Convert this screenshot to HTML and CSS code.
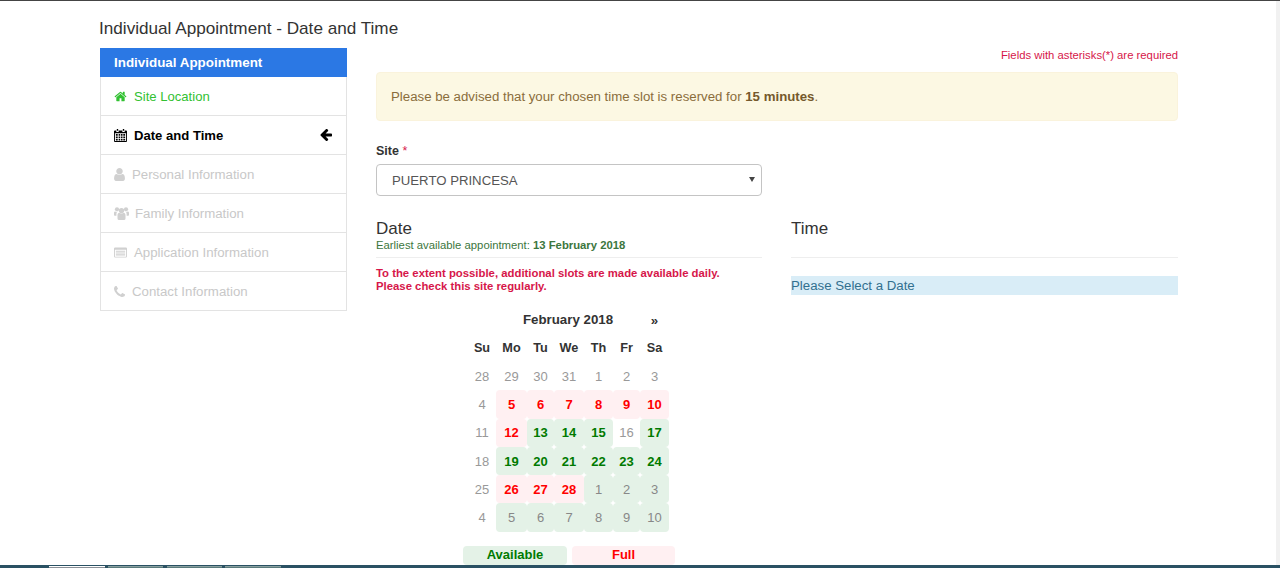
FILE: index.html
```html
<!DOCTYPE html>
<html lang="en">
<head>
    <meta charset="UTF-8">
    <meta name="viewport" content="width=device-width, initial-scale=1.0">
    <title>Individual Appointment - Date and Time</title>
    <link rel="stylesheet" href="styles.css">
</head>
<body>
    <div class="page">
        <h1 class="page-title">Individual Appointment - Date and Time</h1>
        <div class="layout">
            <!-- Steps -->
            <div class="steps">
                <div class="steps-head">Individual Appointment</div>
                <div class="step step-done">
                    <svg class="icon" viewBox="0 0 1664 1792"><path d="M1408 992v480q0 26-19 45t-45 19h-384v-384h-256v384h-384q-26 0-45-19t-19-45v-480q0-1 .5-3t.5-3l575-474 575 474q1 2 1 6zm223-69l-62 74q-8 9-21 11h-3q-13 0-21-7l-692-577-692 577q-12 8-24 7-13-2-21-11l-62-74q-8-10-7-23.500t11-21.500l719-599q32-26 76-26t76 26l244 204v-195q0-14 9-23t23-9h192q14 0 23 9t9 23v408l219 182q10 8 11 21.500t-7 23.500z"/></svg>
                    Site Location
                </div>
                <div class="step step-current">
                    <svg class="icon" viewBox="0 0 14 14"><path d="M3 0h1.500v2H3zM9.500 0H11v2H9.500zM1 1.500h1.500v1.700h2.500V1.500h4v1.700h2.500V1.500H13a1 1 0 0 1 1 1V13a1 1 0 0 1-1 1H1a1 1 0 0 1-1-1V2.500a1 1 0 0 1 1-1zM1 4.500V13h12V4.500zM2 5.500h2v1.800H2zM5 5.500h1.700v1.800H5zM7.500 5.500h1.700v1.800H7.500zM10 5.500h2v1.800h-2zM2 8h2v1.800H2zM5 8h1.700v1.800H5zM7.500 8h1.700v1.800H7.500zM10 8h2v1.800h-2zM2 10.500h2v1.800H2zM5 10.500h1.700v1.800H5zM7.500 10.500h1.700v1.800H7.500zM10 10.500h2v1.800h-2z" fill-rule="evenodd"/></svg>
                    Date and Time
                    <svg class="arrow" viewBox="0 0 1536 1536"><path d="M1536 704v128q0 53-32.500 90.500t-84.500 37.500h-704l293 294q38 36 38 90t-38 90l-75 76q-37 37-90 37-52 0-91-37l-651-652q-37-37-37-90 0-52 37-91l651-650q38-38 91-38 52 0 90 38l75 74q38 38 38 91t-38 91l-293 293h704q52 0 84.500 37.500t32.500 90.500z"/></svg>
                </div>
                <div class="step step-locked">
                    <svg class="icon icon-user" viewBox="256 128 1280 1536"><path d="M1536 1399q0 109-62.500 187t-150.500 78h-854q-88 0-150.500-78t-62.500-187q0-85 8.500-160.500t31.500-152 58.500-131 94-89 134.500-34.500q131 128 313 128t313-128q76 0 134.500 34.500t94 89 58.500 131 31.500 152 8.500 160.500zm-256-887q0 159-112.500 271.500t-271.500 112.500-271.500-112.500-112.500-271.500 112.500-271.500 271.500-112.500 271.500 112.500 112.500 271.500z"/></svg>
                    Personal Information
                </div>
                <div class="step step-locked">
                    <svg class="icon icon-group" viewBox="0 0 15 13"><circle cx="7.500" cy="3.600" r="2.700"/><circle cx="3" cy="2.300" r="2.100"/><circle cx="12" cy="2.300" r="2.100"/><path d="M3.500 8.200C3.500 6.800 4.300 6 5.200 5.800c.6.500 1.400.8 2.300.8s1.700-.3 2.300-.8c.9.200 1.700 1 1.700 2.400v3.300A1.500 1.500 0 0 1 10 13H5a1.500 1.500 0 0 1-1.500-1.500zM0 5.800C0 5 .5 4.400 1.300 4.400c.5.400 1 .6 1.600.6-.3.600-.5 1.300-.5 2.300v1.500H1c-.6 0-1-.4-1-1zM15 5.800c0-.8-.5-1.400-1.300-1.400-.5.400-1 .6-1.600.6.300.6.500 1.300.5 2.300v1.500H14c.6 0 1-.4 1-1z"/></svg>
                    Family Information
                </div>
                <div class="step step-locked">
                    <svg class="icon" viewBox="0 0 14 11"><path fill-rule="evenodd" d="M1.200 0h11.600A1.200 1.200 0 0 1 14 1.200v8.600a1.200 1.200 0 0 1-1.200 1.200H1.200A1.200 1.200 0 0 1 0 9.800V1.200A1.200 1.200 0 0 1 1.200 0zM1 2.500V9.800c0 .1.100.2.200.2h11.600c.1 0 .2-.1.200-.2V2.500zM2 3.500h10v1.200H2zM2 5.500h10v1.200H2zM2 7.500h10v1.200H2z"/></svg>
                    Application Information
                </div>
                <div class="step step-locked">
                    <svg class="icon icon-phone" viewBox="0 0 1408 1408"><path d="M1408 1112q0 27-10 70.500t-21 68.500q-21 50-122 106-94 51-186 51-27 0-53-3.500t-57.500-12.500-47-14.500-55.500-20.500-49-18q-98-35-175-83-127-79-264-216t-216-264q-48-77-83-175-3-9-18-49t-20.500-55.500-14.500-47-12.500-57.500-3.500-53q0-92 51-186 56-101 106-122 25-11 68.500-21t70.500-10q14 0 21 3 18 6 53 76 11 19 30 54t35 63.500 31 53.500q3 4 17.500 25t21.500 35.500 7 28.500q0 20-28.500 50t-62 55-62 53-28.500 46q0 9 5 22.500t8.500 20.500 14 24 11.500 19q76 137 174 235t235 174q2 1 19 11.500t24 14 20.500 8.500 22.500 5q18 0 46-28.500t53-62 55-62 50-28.500q14 0 28.500 7t35.500 21.500 25 17.500q25 15 53.500 31t63.500 35 54 30q70 35 76 53 3 7 3 21z"/></svg>
                    Contact Information
                </div>
            </div>

            <div class="main">
                <div class="required-note">Fields with asterisks(*) are required</div>
                <div class="alert">Please be advised that your chosen time slot is reserved for <b>15 minutes</b>.</div>

                <label class="site-label" for="site">Site <span class="star">*</span></label>
                <div class="select-wrap">
                    <select id="site" class="site-select">
                        <option>PUERTO PRINCESA</option>
                    </select>
                </div>

                <div class="columns">
                    <div class="col col-date">
                        <h2 class="col-title">Date</h2>
                        <div class="earliest">Earliest available appointment: <b>13 February 2018</b></div>
                        <hr class="rule">
                        <p class="slots-note">To the extent possible, additional slots are made available daily.<br>Please check this site regularly.</p>

                        <table class="calendar">
                            <colgroup>
                                <col class="c28"><col class="c31"><col class="c27"><col class="c30"><col class="c29"><col class="c27"><col class="c29">
                            </colgroup>
                            <thead>
                                <tr class="cal-month">
                                    <th></th>
                                    <th class="cal-name" colspan="5">February 2018</th>
                                    <th>»</th>
                                </tr>
                                <tr class="cal-days">
                                    <th>Su</th><th>Mo</th><th>Tu</th><th>We</th><th>Th</th><th>Fr</th><th>Sa</th>
                                </tr>
                            </thead>
                            <tbody>
                                <tr><td>28</td><td>29</td><td>30</td><td>31</td><td>1</td><td>2</td><td>3</td></tr>
                                <tr><td>4</td><td class="full">5</td><td class="full">6</td><td class="full">7</td><td class="full">8</td><td class="full">9</td><td class="full">10</td></tr>
                                <tr><td>11</td><td class="full">12</td><td class="open">13</td><td class="open">14</td><td class="open">15</td><td>16</td><td class="open">17</td></tr>
                                <tr><td>18</td><td class="open">19</td><td class="open">20</td><td class="open">21</td><td class="open">22</td><td class="open">23</td><td class="open">24</td></tr>
                                <tr><td>25</td><td class="full">26</td><td class="full">27</td><td class="full">28</td><td class="next">1</td><td class="next">2</td><td class="next">3</td></tr>
                                <tr><td>4</td><td class="next">5</td><td class="next">6</td><td class="next">7</td><td class="next">8</td><td class="next">9</td><td class="next">10</td></tr>
                            </tbody>
                        </table>

                        <div class="legend">
                            <div class="legend-open">Available</div>
                            <div class="legend-full">Full</div>
                        </div>
                    </div>
                    <div class="col">
                        <h2 class="col-title">Time</h2>
                        <div class="earliest">&nbsp;</div>
                        <hr class="rule">
                        <div class="time-info">Please Select a Date</div>
                    </div>
                </div>
            </div>
        </div>
    </div>

    <!-- Window chrome left in the screenshot -->
    <div class="top-line"></div>
    <div class="scroll-strip"></div>
    <div class="bottom-bar">
        <span class="bar-tab bar-tab-active"></span>
        <span class="bar-tab"></span>
        <span class="bar-tab"></span>
        <span class="bar-tab"></span>
    </div>
</body>
</html>
```

FILE: styles.css
```css
html, body {
    height: 100%;
}
body {
    margin: 0;
    background: #fff;
    color: #333;
    font-family: "Liberation Sans", Arial, sans-serif;
    font-size: 14px;
    overflow: hidden;
}
.top-line {
    position: fixed;
    top: 0;
    left: 0;
    right: 0;
    height: 1px;
    background: #444;
}
.scroll-strip {
    position: fixed;
    top: 1px;
    right: 0;
    bottom: 0;
    width: 4px;
    background: #f1f1f1;
}
.bottom-bar {
    position: fixed;
    left: 0;
    right: 0;
    bottom: 0;
    height: 3px;
    background: #2a5163;
    padding-left: 49px;
    display: flex;
    gap: 3.300px;
}
.bar-tab {
    width: 55.500px;
    margin-top: 1px;
    background: #5b7b7c;
    border-top: 1px solid #8aa0a0;
}
.bar-tab-active {
    background: #8a8f96;
    border-top: 1px solid #fff;
}

.page {
    padding: 18px 102px 0 99px;
}
.page-title {
    margin: 0;
    font-size: 17.150px;
    font-weight: normal;
    line-height: 20px;
    color: #333;
}
.layout {
    display: flex;
    margin-top: 10px;
    padding-left: 1px;
}

/* sidebar */
.steps {
    width: 247px;
    flex-shrink: 0;
    align-self: flex-start;
}
.steps-head {
    height: 29px;
    line-height: 29px;
    padding-left: 14px;
    background: #2b78e4;
    color: #fff;
    font-size: 13.400px;
    font-weight: bold;
}
.step {
    display: flex;
    align-items: center;
    height: 38px;
    padding: 0 14px 0 13px;
    border: 1px solid #e3e3e3;
    border-top: 0;
    font-size: 13.100px;
}
.step-done {
    color: #32c132;
    fill: #32c132;
}
.step-current {
    color: #000;
    fill: #000;
    font-weight: bold;
}
.step-locked {
    color: #c8c8c8;
    fill: #d0d0d0;
    font-size: 13.250px;
}
.icon {
    width: 13px;
    height: 13px;
    margin-right: 7px;
    flex-shrink: 0;
}
.icon-user {
    width: 11px;
}
.icon-group {
    width: 15px;
    margin-right: 6px;
}
.icon-phone {
    width: 11px;
    height: 11px;
}
.arrow {
    width: 12px;
    height: 12px;
    margin-left: auto;
}

/* main column */
.main {
    flex: 1;
    margin-left: 29px;
    min-width: 0;
}
.required-note {
    text-align: right;
    font-size: 11.300px;
    line-height: 14px;
    color: #d6164a;
}
.alert {
    margin-top: 10px;
    height: 47px;
    line-height: 47px;
    padding: 0 14px;
    background: #fcf8e3;
    border: 1px solid #faf3dc;
    border-radius: 4px;
    color: #8a6d3b;
    font-size: 13.250px;
}
.alert b {
    color: #75592c;
}
.site-label {
    display: block;
    margin-top: 22px;
    line-height: 16px;
    font-size: 12.500px;
    font-weight: bold;
    color: #333;
}
.star {
    color: #d6164a;
    font-weight: normal;
}
.select-wrap {
    position: relative;
    width: 386px;
    margin-top: 5px;
}
.select-wrap::after {
    content: "";
    position: absolute;
    right: 7px;
    top: 13px;
    border-left: 3px solid transparent;
    border-right: 3px solid transparent;
    border-top: 5px solid #444;
}
.site-select {
    display: block;
    appearance: none;
    width: 100%;
    height: 32px;
    padding: 0 15px;
    background: #fff;
    border: 1px solid #c4c4c4;
    border-radius: 4px;
    color: #555;
    font-family: inherit;
    font-size: 13.200px;
}
.columns {
    display: flex;
    gap: 29px;
    margin-top: 23px;
}
.col {
    flex: 1;
    min-width: 0;
}
.col-date {
    flex: 0 0 386px;
}
.col-title {
    margin: 0;
    font-size: 17px;
    font-weight: normal;
    line-height: 20px;
    color: #333;
}
.earliest {
    font-size: 11.300px;
    line-height: 13px;
    color: #3c763d;
}
.rule {
    margin: 5px 0 0;
    border: 0;
    border-top: 1px solid #eee;
}
.slots-note {
    margin: 9px 0 0;
    font-size: 11.350px;
    font-weight: bold;
    line-height: 13px;
    color: #d6164a;
}
.time-info {
    margin-top: 18px;
    height: 19px;
    line-height: 19px;
    background: #d9edf7;
    color: #31708f;
    font-size: 13.250px;
}

/* calendar */
.calendar {
    margin: 13px 0 0 92px;
    border-collapse: separate;
    border-spacing: 0;
    table-layout: fixed;
    width: 201px;
    font-size: 13px;
}
.c27 { width: 27px; }
.c28 { width: 28px; }
.c29 { width: 29px; }
.c30 { width: 30px; }
.c31 { width: 31px; }
.calendar th,
.calendar td {
    padding: 0;
    text-align: center;
}
.cal-month th {
    height: 28px;
    font-size: 13.300px;
    color: #333;
}
.calendar .cal-name {
    height: 26px;
    padding-bottom: 2px;
}
.cal-days th {
    height: 28px;
    font-size: 12.700px;
    color: #333;
}
.calendar td {
    height: 28.300px;
    color: #999;
    border-radius: 4px;
}
.calendar td.full {
    background: #fff0f2;
    color: #f00;
    font-weight: bold;
}
.calendar td.open {
    background: #e4f2e7;
    color: #007a00;
    font-weight: bold;
}
.calendar td.next {
    background: #e4f2e7;
    color: #888;
}
.legend {
    display: flex;
    gap: 5px;
    margin: 14px 0 0 87px;
    font-size: 13px;
    font-weight: bold;
    text-align: center;
}
.legend-open,
.legend-full {
    width: 104px;
    height: 19px;
    line-height: 17px;
    border-radius: 4px;
}
.legend-open {
    background: #e4f2e7;
    color: #007a00;
}
.legend-full {
    width: 103px;
    background: #fff0f2;
    color: #f00;
}
```
